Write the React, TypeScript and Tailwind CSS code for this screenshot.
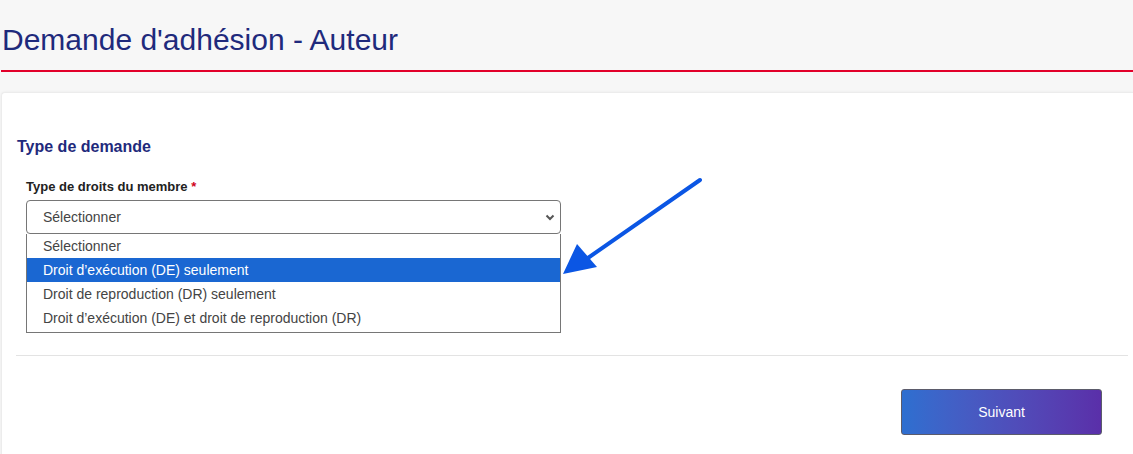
import React from "react";

const options = [
  "Sélectionner",
  "Droit d’exécution (DE) seulement",
  "Droit de reproduction (DR) seulement",
  "Droit d’exécution (DE) et droit de reproduction (DR)",
];

export default function App() {
  return (
    <div className="relative h-[454px] w-[1133px] overflow-hidden bg-[#f7f7f7] font-['Liberation_Sans',Arial,sans-serif]">
      <div className="px-[2px] pt-[22px]">
        <h1 className="text-[30px] leading-[36px] text-[#1f2a7c]">Demande d'adhésion - Auteur</h1>
      </div>
      <div className="mt-[12px] ml-[1px] h-[2px] bg-[#e2002a]" />

      <div className="mt-[20px] ml-[1px] h-[400px] rounded-tl-[4px] border-l border-t border-[#ececec] bg-white shadow-[0_0_3px_rgba(0,0,0,0.06)]">
        <div className="pl-[15px] pt-[44px]">
          <h2 className="text-[16px] font-bold leading-[20px] text-[#1f2a7c]">Type de demande</h2>
        </div>

        <div className="pl-[24px] pt-[22px]">
          <label className="block text-[13px] font-bold leading-[16px] text-[#222]">
            Type de droits du membre <span className="text-[#d0021b]">*</span>
          </label>
          <div className="mt-[5px] flex h-[34px] w-[535px] items-center justify-between rounded-[4px] border border-[#767676] bg-white pl-[16px] pr-[5px]">
            <span className="text-[14px] text-[#444]">Sélectionner</span>
            <svg width="10" height="7" viewBox="0 0 10 7">
              <path d="M1.5 1.5 L5 5 L8.5 1.5" fill="none" stroke="#555" strokeWidth="2" />
            </svg>
          </div>
          <ul className="w-[535px] border border-t-0 border-[#767676] bg-white pb-[2px]">
            {options.map((o, i) => (
              <li
                key={o}
                className={`h-[24px] pl-[16px] text-[14px] leading-[24px] ${
                  i === 1 ? "bg-[#1a67d2] text-white" : "text-[#444]"
                }`}
              >
                {o}
              </li>
            ))}
          </ul>
        </div>

        <div className="ml-[14px] mr-[5px] mt-[22px] h-[1px] bg-[#e3e3e3]" />

        <div className="flex justify-end pr-[31px] pt-[33px]">
          <button className="h-[46px] w-[201px] rounded-[3px] border border-[#5b5b6b] bg-gradient-to-r from-[#2d6fd0] to-[#5a2fa9] text-[14px] text-white">
            Suivant
          </button>
        </div>
      </div>

      <svg className="absolute left-[560px] top-[175px]" width="150" height="105" viewBox="0 0 150 105">
        <line x1="140" y1="5" x2="25" y2="85" stroke="#0b56e4" strokeWidth="4" strokeLinecap="round" />
        <polygon points="3,99 17,69 37,92" fill="#0b56e4" />
      </svg>
    </div>
  );
}
